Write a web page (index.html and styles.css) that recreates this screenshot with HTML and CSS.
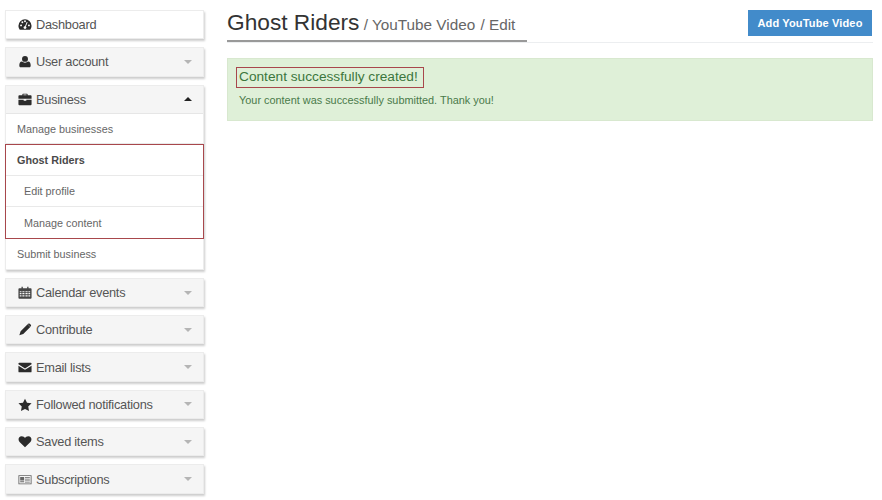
FILE: index.html
```html
<!DOCTYPE html>
<html lang="en">
<head>
<meta charset="utf-8">
<title>Ghost Riders</title>
<link rel="stylesheet" href="styles.css">
</head>
<body>
<div class="page">
  <nav class="sidebar">
    <div class="card">
      <div class="head plain"><svg class="ico" viewBox="0 0 16 14"><path d="M8 1a7.500 7.500 0 0 0-7.500 7.500c0 1.700.6 3.300 1.500 4.500h12c.9-1.200 1.500-2.800 1.500-4.500A7.500 7.500 0 0 0 8 1z"/><g fill="#fff"><circle cx="3.500" cy="8" r="1.100"/><circle cx="5" cy="4.500" r="1.100"/><circle cx="8" cy="3.300" r="1.100"/><circle cx="12.500" cy="8" r="1.100"/><circle cx="8" cy="10.500" r="1.600"/><path d="M7.500 10l2.500-6 1 .4-2.500 6z"/></g></svg><span>Dashboard</span></div>
    </div>
    <div class="card">
      <div class="head"><svg class="ico" viewBox="0 0 16 14"><circle cx="8" cy="4" r="3.400"/><path d="M3 13.500c-1 0-1.500-.7-1.500-1.700 0-2.500.7-4.700 3-4.700 1 .8 2.200 1.300 3.500 1.300s2.500-.5 3.500-1.300c2.300 0 3 2.200 3 4.700 0 1-.5 1.700-1.500 1.700z"/></svg><span>User account</span><i class="caret"></i></div>
    </div>
    <div class="card">
      <div class="head"><svg class="ico" viewBox="0 0 16 14"><path d="M5 2V1c0-.4.300-.700.700-.700h4.600c.4 0 .7.300.7.700v1h3.500c.6 0 1 .4 1 1v3H.5V3c0-.6.400-1 1-1zm1.200 0h3.600V1.300H6.200zM.5 7.200h6v1.300h3V7.200h6V12.500c0 .6-.4 1-1 1h-13c-.6 0-1-.4-1-1z"/></svg><span>Business</span><i class="caret up"></i></div>
      <ul class="items">
        <li class="item short nudge">Manage businesses</li>
        <li class="group">
          <ul class="items">
            <li class="item strong">Ghost Riders</li>
            <li class="item sub nudge">Edit profile</li>
            <li class="item sub nudge">Manage content</li>
          </ul>
        </li>
        <li class="item short">Submit business</li>
      </ul>
    </div>
    <div class="card">
      <div class="head"><svg class="ico soft" viewBox="0 0 16 14"><path fill-rule="evenodd" d="M1.500 2H4V.5h1.500V2h5V.5H12V2h2.500c.6 0 1 .4 1 1v10c0 .6-.4 1-1 1h-13c-.6 0-1-.4-1-1V3c0-.6.400-1 1-1zm.5 3.500V6.700h2V5.500zm3 0V6.700h2.400V5.500zm3.500 0V6.700H11V5.500zm3.400 0V6.700h2V5.500zM2 7.700v1.400h2V7.700zm3 0v1.400h2.400V7.700zm3.500 0v1.400H11V7.700zm3.400 0v1.400h2V7.700zM2 10.100v1.400h2v-1.400zm3 0v1.400h2.400v-1.400zm3.500 0v1.400H11v-1.400zm3.400 0v1.400h2v-1.400z"/></svg><span>Calendar events</span><i class="caret"></i></div>
    </div>
    <div class="card">
      <div class="head"><svg class="ico" viewBox="0 0 16 14"><path d="M11 1l3 3-8 8-4.500 1.500L3 9zM11.800.3c.5-.4 1.100-.4 1.500 0l1.400 1.400c.4.400.4 1 0 1.500l-.6.600-3-3z"/></svg><span>Contribute</span><i class="caret"></i></div>
    </div>
    <div class="card">
      <div class="head"><svg class="ico" viewBox="0 0 16 14"><path d="M1.500 1.500h13c.6 0 1 .4 1 1v.8L8 8 .5 3.300v-.8c0-.6.400-1 1-1zM.5 5l7.500 4.700L15.500 5v6.500c0 .6-.4 1-1 1h-13c-.6 0-1-.4-1-1z"/></svg><span>Email lists</span><i class="caret"></i></div>
    </div>
    <div class="card">
      <div class="head"><svg class="ico" viewBox="0 0 16 14"><path d="M8 .3l2.300 4.700 5.200.7-3.800 3.600.9 5.100L8 12.100l-4.600 2.300.9-5.100L.5 5.700 5.700 5z"/></svg><span>Followed notifications</span><i class="caret"></i></div>
    </div>
    <div class="card">
      <div class="head"><svg class="ico" viewBox="0 0 16 14"><path d="M8 13.500L1.800 7.500C-.2 5.500.2 1 4.300 1 6 1 7.200 2 8 3c.8-1 2-2 3.700-2 4.100 0 4.500 4.500 2.500 6.500z"/></svg><span>Saved items</span><i class="caret"></i></div>
    </div>
    <div class="card">
      <div class="head"><svg class="ico faint" viewBox="0 0 16 14"><path fill-rule="evenodd" d="M.5 2h15v10.500H.5zM1.500 3v8.500h13V3zM2.500 4h4.500v4H2.500zM8 4h5.500v1H8zm0 2h5.500v1H8zm0 2h5.500v1H8zM2.500 9H7v1H2.500zM8 10h5.500v.8H8z"/></svg><span>Subscriptions</span><i class="caret"></i></div>
    </div>
  </nav>
  <main class="main">
    <header class="top">
      <h1 class="title"><span class="name">Ghost Riders</span> <small class="crumb">/ YouTube Video</small> <small class="crumb gap">/ Edit</small></h1>
      <a class="btn">Add YouTube Video</a>
    </header>
    <section class="alert">
      <h2 class="alert-title">Content successfully created!</h2>
      <p class="alert-text">Your content was successfully submitted. Thank you!</p>
    </section>
  </main>
</div>
</body>
</html>
```
FILE: styles.css
```css
* { box-sizing: border-box; }
html, body { margin: 0; padding: 0; }
body { background: #fff; font-family: "Liberation Sans", Arial, sans-serif; color: #333; height: 500px; overflow: hidden; }
.page { display: flex; align-items: flex-start; padding: 10px 9px 0 5px; }
.sidebar { width: 199px; flex: none; display: flex; flex-direction: column; gap: 8px; }
.card { background: #fff; border: 1px solid #ececec; box-shadow: 1px 2px 2px rgba(0,0,0,.2); }
.head { height: 27.3px; display: flex; align-items: center; padding: 0 11px 0 12px; background: #f5f5f5; font-size: 12.8px; letter-spacing: -.26px; color: #555; }
.head.plain { background: #fff; }
.head span { flex: 1; margin-left: 4px; }
.ico { width: 14px; height: 13px; fill: #2b2b2b; flex: none; }
.ico.soft { fill: #444; }
.ico.faint { fill: #666; }
.caret { width: 0; height: 0; border-left: 4px solid transparent; border-right: 4px solid transparent; border-top: 4px solid #b5b5b5; }
.caret.up { border-top: 0; border-bottom: 4px solid #222; }
.items { list-style: none; margin: 0; padding: 0; }
.card > .items { border-top: 1px solid #e6e6e6; }
.item { height: 31px; display: flex; align-items: center; padding: 0 11px; font-size: 10.8px; color: #666; border-bottom: 1px solid #e9e9e9; }
.item.short { height: 30px; }
.item.nudge { padding-top: 1px; }
.item:last-child { border-bottom: 0; }
.group { margin: 0 -1px; border: 1px solid #a8474c; height: 95px; }
.strong { font-weight: 700; color: #4a4a4a; }
.sub { padding-left: 18px; }
.main { flex: 1; margin-left: 23px; }
.top { height: 33px; display: flex; justify-content: space-between; align-items: flex-start; border-bottom: 1px solid #eceef0; }
.title { margin: -1px 0 0; height: 33px; width: 300px; border-bottom: 2px solid #999; font-weight: 400; font-size: 22.7px; line-height: 27px; color: #333; white-space: nowrap; }
.name { margin-right: -2px; }
.crumb { font-size: 15.3px; color: #666; }
.gap { margin-left: -1px; }
.btn { margin: 0 1px 0 0; width: 124px; height: 26px; background: #428bca; color: #fff; font-size: 11px; font-weight: 700; letter-spacing: .15px; display: flex; align-items: center; justify-content: center; }
.alert { margin-top: 15px; height: 63px; background: #dff0d8; border: 1px solid #d8e8cf; padding: 8px; color: #3c763d; }
.alert-title { margin: 0; width: 188px; height: 21px; border: 1px solid #a8474c; font-size: 13.7px; font-weight: 400; line-height: 18px; padding-left: 2px; white-space: nowrap; }
.alert-text { margin: 5px 0 0 3px; font-size: 10.9px; line-height: 14px; color: #4a7a4a; }
```
